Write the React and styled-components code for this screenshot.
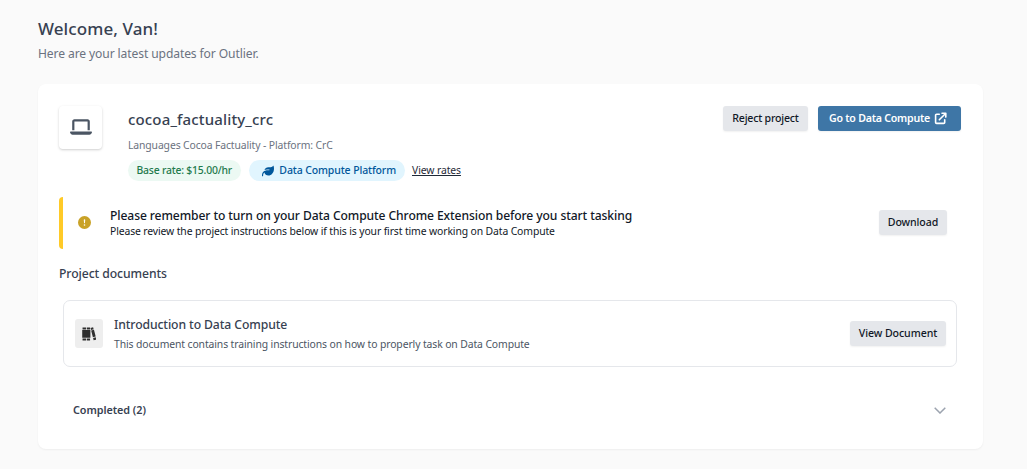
import React from "react";
import styled, { createGlobalStyle } from "styled-components";
import { FaLaptop, FaLeaf } from "react-icons/fa6";
import { BsExclamationCircleFill } from "react-icons/bs";

const GlobalStyle = createGlobalStyle`
  * { box-sizing: border-box; }
  body {
    margin: 0;
    background: #fafafa;
    font-family: "Segoe UI", "Noto Sans", "Open Sans", sans-serif;
    color: #374151;
  }
`;

const Page = styled.main`
  height: 469px;
  padding: 16px 44px 0 38px;
  overflow: hidden;
`;

const Text = styled.div`
  margin: 0;
  font-size: ${(p) => p.$size}px;
  font-weight: ${(p) => p.$weight || 400};
  line-height: ${(p) => p.$line}px;
  letter-spacing: ${(p) => p.$track || 0}px;
  color: ${(p) => p.$color || "#374151"};
  white-space: nowrap;
`;

const Card = styled.section`
  height: 365px;
  margin-top: 19px;
  padding: 22px 22px 0 21px;
  background: #fff;
  border-radius: 8px;
  box-shadow: 0 1px 2px rgba(0, 0, 0, 0.05);
`;

const Header = styled.header`
  display: flex;
  height: 91px;
`;

const ProjectIcon = styled.div`
  display: flex;
  align-items: center;
  justify-content: center;
  width: 43px;
  height: 43px;
  margin-right: 26px;
  border-radius: 4px;
  color: #4b5563;
  box-shadow: 0 1px 3px rgba(0, 0, 0, 0.14), 0 1px 2px rgba(0, 0, 0, 0.06);

  svg {
    margin-top: -1px;
  }
`;

const Grow = styled.div`
  flex: 1;
  min-width: 0;
`;

const Tags = styled.div`
  display: flex;
  align-items: center;
  margin-top: 1px;
`;

const Tag = styled.span`
  display: flex;
  align-items: center;
  justify-content: flex-end;
  width: ${(p) => p.$width}px;
  height: 21px;
  gap: 5px;
  margin-right: 8px;
  padding-right: 9px;
  border-radius: 11px;
  background: ${(p) => p.$bg};
  color: ${(p) => p.$color};
`;

const RatesLink = styled.a`
  font-size: 10.4px;
  line-height: 15px;
  letter-spacing: -0.1px;
  margin-left: -1px;
  color: #1f2937;
  text-decoration: underline;
  text-underline-offset: 1px;
  white-space: nowrap;
`;

const Actions = styled.div`
  display: flex;
  gap: 10px;
`;

const Button = styled.button`
  display: flex;
  align-items: center;
  justify-content: center;
  gap: 4px;
  flex: none;
  width: ${(p) => p.$width}px;
  height: 25px;
  padding: ${(p) => (p.$primary ? "0 3px 1px 0" : "0 0 1px")};
  border: 0;
  border-radius: 3px;
  background: ${(p) => (p.$primary ? "#3e76a6" : "#e5e7eb")};
  box-shadow: 0 1px 2px rgba(0, 0, 0, 0.06);
  color: ${(p) => (p.$primary ? "#fff" : "#111827")};
  font-family: inherit;
`;

const Notice = styled.div`
  display: flex;
  align-items: center;
  height: 52px;
  padding: 0 14px 1px 15px;
  border-left: 4px solid #ffca28;
  border-radius: 4px;
`;

const NoticeIcon = styled.span`
  display: flex;
  width: 13px;
  margin-right: 19px;
  color: #c9a227;
`;

const DocumentsTitle = styled.div`
  margin-top: 15px;
`;

const Document = styled.article`
  display: flex;
  align-items: center;
  height: 67px;
  margin: 16px 4px 0;
  padding: 0 10px 0 11px;
  border: 1px solid #e5e7eb;
  border-radius: 7px;
`;

const DocumentIcon = styled.span`
  display: flex;
  align-items: center;
  justify-content: center;
  width: 28px;
  height: 29px;
  margin-right: 11px;
  border-radius: 3px;
  background: #eee;
  color: #2f2f2f;
`;

const Completed = styled.div`
  display: flex;
  align-items: center;
  justify-content: space-between;
  height: 20px;
  margin: 33px 15px 0 14px;

  ${Text} {
    padding-bottom: 2px;
  }
`;

const ButtonLabel = ({ weight = 500, track = -0.15, children }) => (
  <Text as="span" $size={10.6} $weight={weight} $line={15} $track={track} $color="inherit">{children}</Text>
);

const ExternalIcon = () => (
  <svg width="13" height="13" viewBox="0 0 13 13" fill="none" stroke="currentColor" strokeWidth="1.6" strokeLinecap="round" strokeLinejoin="round">
    <path d="M5.3 2.3H2.6a1 1 0 0 0-1 1v7.1a1 1 0 0 0 1 1h7.1a1 1 0 0 0 1-1V7.7M8 1.3h3.8v3.8M11.6 1.5 5.3 7.8" />
  </svg>
);

const BooksIcon = () => (
  <svg width="14" height="14" viewBox="0 0 13 13" fill="currentColor">
    <path d="M.5.5h3.2v1.8H.5zM.2 2.8h3.8v7.2H.2zM.5 10.6h3.2v1.9H.5zM4.4.5h3.1v1.8H4.4zM4 2.8h3.8v7.2H4zM4.4 10.6h3.1v1.9H4.4z" />
    <path d="m7.9.9 2.4-.6.5 1.7-2.4.7zM8.5 3.3l2.6-.7 1.6 6.2-2.6.7zM10.3 10.2l2.5-.6.4 2.1-2.4.7z" />
  </svg>
);

export default function App() {
  return (
    <Page>
      <GlobalStyle />
      <Text as="h1" $size={17} $weight={500} $line={26} $track={0.1}>Welcome, Van!</Text>
      <Text $size={12.1} $line={23} $track={-0.11} $color="#6b7280">Here are your latest updates for Outlier.</Text>
      <Card>
        <Header>
          <ProjectIcon><FaLaptop size={22} /></ProjectIcon>
          <Grow>
            <Text $size={15} $weight={500} $line={26} $track={0.15}>cocoa_factuality_crc</Text>
            <Text $size={10.4} $line={27} $track={-0.12} $color="#6b7280">Languages Cocoa Factuality - Platform: CrC</Text>
            <Tags>
              <Tag $width={113} $bg="#ecf9f3" $color="#1f7a4d">
                <Text $size={10.4} $weight={500} $line={15} $track={-0.2} $color="inherit">Base rate: $15.00/hr</Text>
              </Tag>
              <Tag $width={156} $bg="#e1f5fe" $color="#01579b">
                <FaLeaf size={12} />
                <Text $size={10.5} $weight={500} $line={15} $track={-0.12} $color="inherit">Data Compute Platform</Text>
              </Tag>
              <RatesLink>View rates</RatesLink>
            </Tags>
          </Grow>
          <Actions>
            <Button $width={85}><ButtonLabel track={-0.2}>Reject project</ButtonLabel></Button>
            <Button $width={143} $primary>
              <ButtonLabel weight={600} track={-0.22}>Go to Data Compute</ButtonLabel>
              <ExternalIcon />
            </Button>
          </Actions>
        </Header>
        <Notice>
          <NoticeIcon><BsExclamationCircleFill size={13} /></NoticeIcon>
          <Grow>
            <Text $size={12.1} $weight={500} $line={17} $track={-0.09} $color="#111827">Please remember to turn on your Data Compute Chrome Extension before you start tasking</Text>
            <Text $size={10.4} $line={15} $track={-0.12} $color="#111827">Please review the project instructions below if this is your first time working on Data Compute</Text>
          </Grow>
          <Button $width={68}><ButtonLabel track={-0.1}>Download</ButtonLabel></Button>
        </Notice>
        <DocumentsTitle><Text $size={12.2} $weight={500} $line={20} $track={-0.08}>Project documents</Text></DocumentsTitle>
        <Document>
          <DocumentIcon><BooksIcon /></DocumentIcon>
          <Grow>
            <Text $size={12.2} $weight={500} $line={20} $track={-0.1}>Introduction to Data Compute</Text>
            <Text $size={10.4} $line={18} $track={-0.11} $color="#4b5563">This document contains training instructions on how to properly task on Data Compute</Text>
          </Grow>
          <Button $width={96}><ButtonLabel track={-0.08}>View Document</ButtonLabel></Button>
        </Document>
        <Completed>
          <Text $size={10.8} $weight={600} $line={15} $track={-0.05}>Completed (2)</Text>
          <svg width="12" height="7" viewBox="0 0 12 7" fill="none" stroke="#9ca3af" strokeWidth="1.5">
            <path d="M.7.7 6 6 11.3.7" />
          </svg>
        </Completed>
      </Card>
    </Page>
  );
}
